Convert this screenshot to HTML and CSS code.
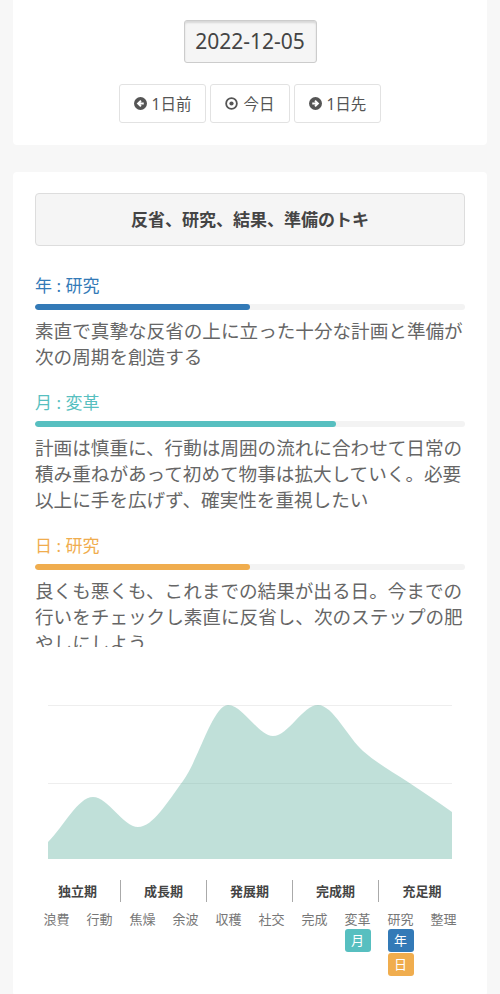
FILE: index.html
```html
<!DOCTYPE html>
<html lang="ja">

<head>
    <meta charset="UTF-8">
    <link rel="stylesheet" href="styles.css">
</head>

<body>
    <div class="card top-card">
        <div class="date-box">2022-12-05</div>
        <div class="nav-buttons">
            <button class="nav-btn">
                <svg width="13" height="13" viewBox="0 0 16 16">
                    <circle cx="8" cy="8" r="8" fill="#555" />
                    <path d="M12 8H5.2M8.6 4.4L5 8l3.6 3.6" stroke="#fff" stroke-width="2.4" fill="none" />
                </svg>
                1日前
            </button>
            <button class="nav-btn">
                <svg width="13" height="13" viewBox="0 0 16 16">
                    <circle cx="8" cy="8" r="6.6" stroke="#555" stroke-width="2.2" fill="none" />
                    <circle cx="8" cy="8" r="2.6" fill="#555" />
                </svg>
                今日
            </button>
            <button class="nav-btn">
                <svg width="13" height="13" viewBox="0 0 16 16">
                    <circle cx="8" cy="8" r="8" fill="#555" />
                    <path d="M4 8h6.8M7.4 4.4L11 8l-3.6 3.6" stroke="#fff" stroke-width="2.4" fill="none" />
                </svg>
                1日先
            </button>
        </div>
    </div>

    <div class="card main-card">
        <div class="title-box">反省、研究、結果、準備のトキ</div>

        <div class="cycle year">
            <div class="cycle-label">年 : 研究</div>
            <div class="bar"><div class="bar-fill" style="width: 50%"></div></div>
            <p class="cycle-text">素直で真摯な反省の上に立った十分な計画と準備が次の周期を創造する</p>
        </div>

        <div class="cycle month">
            <div class="cycle-label">月 : 変革</div>
            <div class="bar"><div class="bar-fill" style="width: 70%"></div></div>
            <p class="cycle-text">計画は慎重に、行動は周囲の流れに合わせて日常の積み重ねがあって初めて物事は拡大していく。必要以上に手を広げず、確実性を重視したい</p>
        </div>

        <div class="cycle day">
            <div class="cycle-label">日 : 研究</div>
            <div class="bar"><div class="bar-fill" style="width: 50%"></div></div>
            <p class="cycle-text clipped">良くも悪くも、これまでの結果が出る日。今までの行いをチェックし素直に反省し、次のステップの肥やしにしよう</p>
        </div>

        <svg class="chart" width="404" height="160" viewBox="0 0 404 160">
            <line x1="0" y1="6.5" x2="404" y2="6.5" stroke="#eee" />
            <line x1="0" y1="84.5" x2="404" y2="84.5" stroke="#eee" />
            <path fill="rgba(98, 178, 160, 0.4)" d="M0 143 C15 128 30 98 45 98 C60 98 75 128 90 128 C105 128 120 102 135 82 C150 62 165 6 180 6 C195 6 210 37 225 37 C240 37 255 6 270 6 C285 6 300 39 315 52 C330 65 345 73 360 83 C375 93 390 103 404 113 L404 160 L0 160 Z" />
        </svg>

        <div class="phases">
            <div class="phase">独立期</div>
            <div class="phase">成長期</div>
            <div class="phase">発展期</div>
            <div class="phase">完成期</div>
            <div class="phase">充足期</div>
        </div>

        <div class="stages">
            <div class="stage">浪費</div>
            <div class="stage">行動</div>
            <div class="stage">焦燥</div>
            <div class="stage">余波</div>
            <div class="stage">収穫</div>
            <div class="stage">社交</div>
            <div class="stage">完成</div>
            <div class="stage">変革
                <span class="badge badge-month">月</span>
            </div>
            <div class="stage">研究
                <span class="badge badge-year">年</span>
                <span class="badge badge-day">日</span>
            </div>
            <div class="stage">整理</div>
        </div>
    </div>
</body>

</html>
```

FILE: styles.css
```css
body {
    margin: 0;
    background-color: #f7f7f7;
    font-family: "Noto Sans", "Noto Sans CJK JP", sans-serif;
    color: #555;
}

.card {
    background-color: #fff;
    margin: 0 13px;
    border-radius: 4px;
}

.top-card {
    border-radius: 0 0 4px 4px;
    padding: 20px 0 22px;
    display: flex;
    flex-direction: column;
    align-items: center;
}

.date-box {
    width: 131px;
    height: 41px;
    line-height: 41px;
    text-align: center;
    font-size: 21px;
    color: #444;
    background-color: #f5f5f5;
    border: 1px solid #ccc;
    border-radius: 3px;
    box-shadow: inset 0 2px 2px rgba(0, 0, 0, 0.12);
}

.nav-buttons {
    display: flex;
    gap: 4px;
    margin-top: 21px;
}

.nav-btn {
    height: 39px;
    display: flex;
    align-items: center;
    gap: 5px;
    padding: 0 14px;
    font-family: inherit;
    font-size: 15.5px;
    color: #555;
    background-color: #fff;
    border: 1px solid #e2e2e2;
    border-radius: 3px;
}

.main-card {
    margin-top: 27px;
    padding: 21px 22px 20px;
}

.title-box {
    height: 51px;
    line-height: 51px;
    text-align: center;
    font-size: 17px;
    font-weight: bold;
    color: #444;
    background-color: #f5f5f5;
    border: 1px solid #ddd;
    border-radius: 4px;
    margin-bottom: 28px;
}

.cycle {
    margin-bottom: 21px;
}

.cycle-label {
    font-size: 17px;
    line-height: 24px;
}

.bar {
    height: 6px;
    margin-top: 6px;
    background-color: #f3f3f3;
    border-radius: 3px;
    overflow: hidden;
}

.bar-fill {
    height: 100%;
    border-radius: 3px;
}

.cycle-text {
    margin: 8px 0 0;
    font-size: 18.6px;
    line-height: 26px;
    color: #666;
}

/* 本文は3行目の途中で切れる */
.cycle-text.clipped {
    height: 69px;
    overflow: hidden;
}

.year .cycle-label { color: #337ab7; }
.year .bar-fill { background-color: #337ab7; }
.month .cycle-label { color: #57bfc0; }
.month .bar-fill { background-color: #57bfc0; }
.day .cycle-label { color: #f0ad4e; }
.day .bar-fill { background-color: #f0ad4e; }

.day {
    margin-bottom: 0;
}

.chart {
    display: block;
    margin: 52px 0 0 13px;
}

.phases {
    display: grid;
    grid-template-columns: repeat(5, 1fr);
    margin-top: 21px;
}

.phase {
    line-height: 22px;
    text-align: center;
    font-size: 13px;
    font-weight: bold;
    color: #444;
    border-right: 1px solid #aaa;
}

.phase:last-child {
    border-right: none;
}

.stages {
    display: grid;
    grid-template-columns: repeat(10, 1fr);
    margin-top: 8px;
}

.stage {
    display: flex;
    flex-direction: column;
    align-items: center;
    gap: 1px;
    font-size: 13px;
    line-height: 18px;
    color: #777;
}

.badge {
    width: 26px;
    height: 23px;
    line-height: 23px;
    text-align: center;
    font-size: 13px;
    color: #fff;
    border-radius: 3px;
}

.badge-month { background-color: #57bfc0; }
.badge-year { background-color: #337ab7; }
.badge-day { background-color: #f0ad4e; }
```
